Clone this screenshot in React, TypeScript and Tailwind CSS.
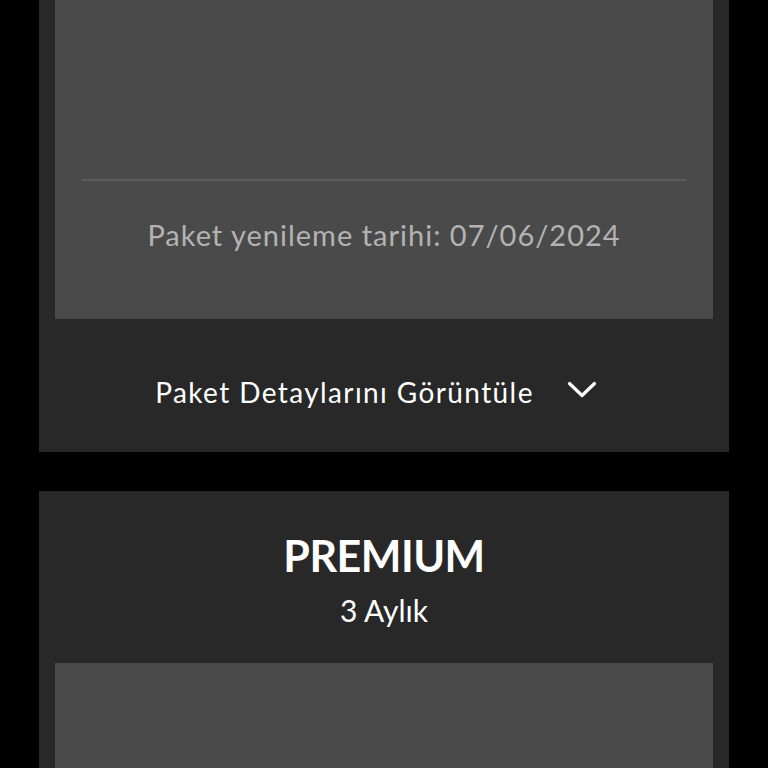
const font = { fontFamily: "Lato, 'Noto Sans', sans-serif" };

function Chevron() {
  return (
    <svg width="30" height="18" viewBox="0 0 30 18" fill="none" className="mt-[-4px]">
      <polyline points="2.5,2.5 15,14.5 27.5,2.5" stroke="white" strokeWidth="3.2" strokeLinecap="round" strokeLinejoin="round" />
    </svg>
  );
}

export default function App() {
  return (
    <div className="h-[768px] w-[768px] overflow-hidden bg-black" style={font}>
      <div className="mx-[39px] bg-[#282828]">
        <div className="mx-4 flex h-[319px] flex-col bg-[#4a4a4a]">
          <div className="h-[179px]" />
          <div className="mx-[27px] h-[2px] bg-[#5c5c5c]" />
          <div className="flex flex-1 items-center justify-center pb-[30px] text-[29px] tracking-[1px] text-[#b3b3b3]">
            Paket yenileme tarihi: 07/06/2024
          </div>
        </div>
        <button className="flex h-[133px] w-full items-center justify-center gap-[33px] pt-[12px] pr-[16px] text-[28px] tracking-[1.4px] text-white">
          <span>Paket Detaylarını Görüntüle</span>
          <Chevron />
        </button>
      </div>

      <div className="mx-[39px] mt-[39px] bg-[#282828]">
        <div className="flex h-[172px] flex-col items-center pt-[43px]">
          <h2 className="text-[43px] font-bold leading-none tracking-[-0.5px] text-white">PREMIUM</h2>
          <p className="mt-[18px] text-[30px] leading-none text-white">3 Aylık</p>
        </div>
        <div className="mx-4 h-[300px] bg-[#4a4a4a]" />
      </div>
    </div>
  );
}
